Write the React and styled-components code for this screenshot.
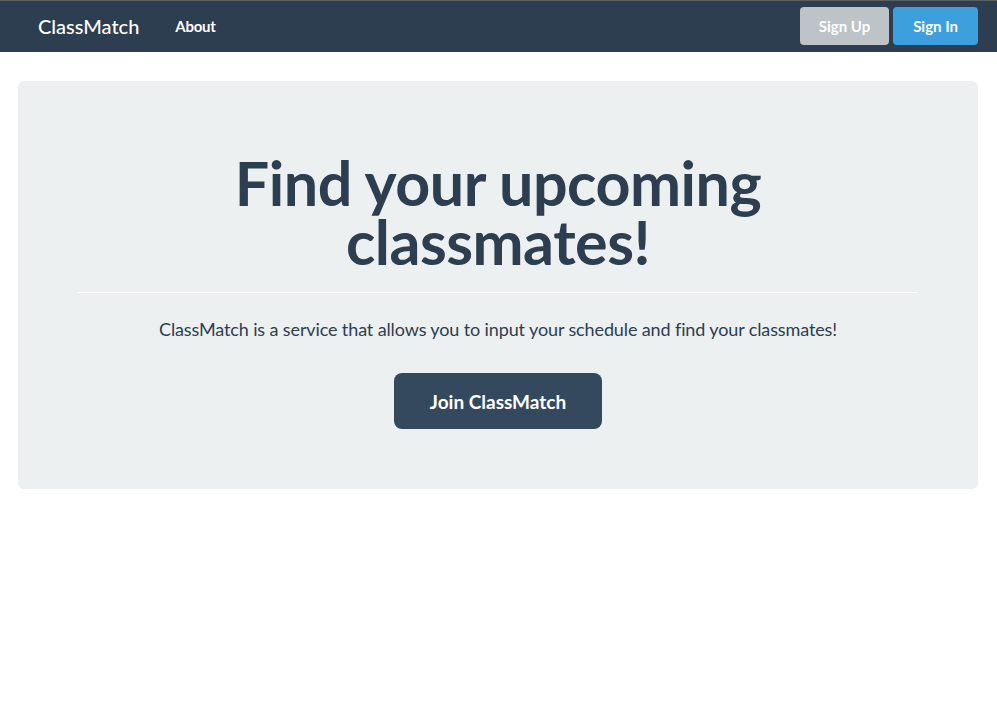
import styled, { createGlobalStyle } from "styled-components";

const GlobalStyle = createGlobalStyle`
  * {
    box-sizing: border-box;
  }
  body {
    margin: 0;
    background: #ffffff;
    font-family: Lato, "Open Sans", sans-serif;
    color: #2c3e50;
  }
`;

const Navbar = styled.nav`
  display: flex;
  align-items: center;
  height: 52px;
  padding: 0 19px 2px 38px;
  background-color: #2c3e50;
  border-top: 1px solid #5b5e61;
`;

const Brand = styled.a`
  color: #ffffff;
  font-size: 20px;
  font-weight: 500;
  text-decoration: none;
  margin-right: 36px;
`;

const NavLink = styled.a`
  color: #ffffff;
  font-size: 15px;
  font-weight: 700;
  letter-spacing: -0.3px;
  text-decoration: none;
`;

const NavRight = styled.div`
  margin-left: auto;
  display: flex;
  gap: 4px;
`;

const NavButton = styled.button`
  height: 38px;
  padding: 0 ${(p) => p.$pad}px;
  border: none;
  border-radius: 4px;
  background-color: ${(p) => p.$bg};
  color: #ffffff;
  font-family: inherit;
  font-size: 15px;
  font-weight: 700;
  cursor: pointer;
`;

const Main = styled.main`
  padding: 29px 19px 0 18px;
`;

const Jumbotron = styled.section`
  background-color: #ecf0f1;
  border-radius: 6px;
  padding: 72px 60px 60px;
  text-align: center;
`;

const Title = styled.h1`
  margin: 0 auto;
  max-width: 560px;
  font-size: 61px;
  line-height: 59px;
  font-weight: 700;
  color: #2c3e50;
  letter-spacing: -0.5px;
`;

const Divider = styled.hr`
  margin: 21px 0 24px;
  border: none;
  border-top: 1px solid #ffffff;
`;

const Lead = styled.p`
  margin: 0 0 32px;
  font-size: 18px;
  line-height: 24px;
  letter-spacing: -0.12px;
  color: #2c3e50;
`;

const JoinButton = styled.button`
  height: 56px;
  padding: 0 36px;
  border: none;
  border-radius: 8px;
  background-color: #34495e;
  color: #ffffff;
  font-family: inherit;
  font-size: 19px;
  font-weight: 700;
  cursor: pointer;
`;

export default function App() {
  return (
    <>
      <GlobalStyle />
      <Navbar>
        <Brand href="#">ClassMatch</Brand>
        <NavLink href="#">About</NavLink>
        <NavRight>
          <NavButton $bg="#bdc3c7" $pad={19}>Sign Up</NavButton>
          <NavButton $bg="#3e9fdd" $pad={20}>Sign In</NavButton>
        </NavRight>
      </Navbar>
      <Main>
        <Jumbotron>
          <Title>Find your upcoming classmates!</Title>
          <Divider />
          <Lead>
            ClassMatch is a service that allows you to input your schedule and
            find your classmates!
          </Lead>
          <JoinButton>Join ClassMatch</JoinButton>
        </Jumbotron>
      </Main>
    </>
  );
}
